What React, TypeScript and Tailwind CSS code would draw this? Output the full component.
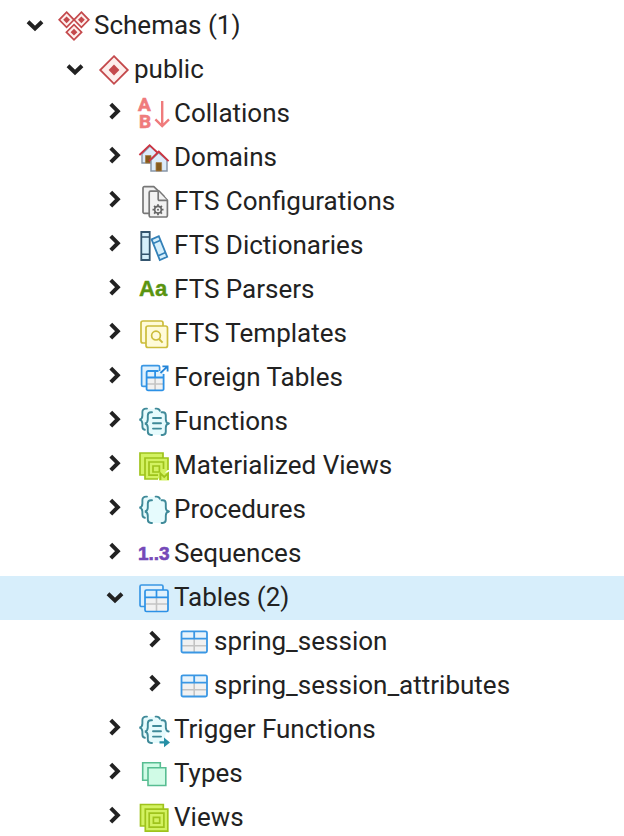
import { useState } from "react";
import type { ReactNode } from "react";
import clsx from "clsx";

type TreeNode = {
  label: string;
  icon: ReactNode;
  open?: boolean;
  children?: TreeNode[];
};

function Icon({ children }: { children: ReactNode }) {
  return (
    <svg viewBox="0 0 32 32" fill="none" aria-hidden="true" className="size-8 shrink-0 overflow-visible">
      {children}
    </svg>
  );
}

const schemas = (
  <Icon>
    <g stroke="#c4494c" strokeWidth="1.7" fill="#fdeeec">
      <path d="M8.6 2.2l7.4 7.6-7.4 7.6-7.4-7.6z" />
      <path d="M23.4 2.2l7.4 7.6-7.4 7.6-7.4-7.6z" />
      <path d="M16 14.6l7.6 7.6-7.6 7.6-7.6-7.6z" />
    </g>
    <path d="M8.6 6.4L12 9.8l-3.4 3.4-3.4-3.4zM23.4 6.4l3.4 3.4-3.4 3.4L20 9.800zM16 18.800l3.400 3.400-3.400 3.400-3.400-3.400z" fill="#c4494c" />
  </Icon>
);

const schema = (
  <Icon>
    <path d="M16 2.200L29.800 16 16 29.800 2.200 16z" fill="#fdeeec" stroke="#c4494c" strokeWidth="1.800" />
    <path d="M16 10.600l5.400 5.400-5.400 5.400-5.400-5.400z" fill="#c4494c" />
  </Icon>
);

const collations = (
  <Icon>
    <g fill="#ef7b7c" stroke="#ef7b7c" strokeWidth=".6" fontFamily="Roboto, sans-serif" fontWeight="700" fontSize="19">
      <text x="0" y="13">A</text>
      <text x="1" y="30">B</text>
    </g>
    <path d="M24.200 3v24.500M17.400 21.400l6.800 6.600 6.800-6.600" stroke="#ef7b7c" strokeWidth="2.400" />
  </Icon>
);

const domains = (
  <Icon>
    <path d="M4 12l8-8 9 8v9H4z" fill="#dcebfa" stroke="#8695a6" strokeWidth="1.400" />
    <path d="M7.500 13.500h5.500V21H7.500z" fill="#855a1c" stroke="#a97f45" strokeWidth=".8" />
    <path d="M1.400 13L11.600 3.200 22 13" stroke="#cc3341" strokeWidth="1.800" />
    <path d="M13 18l7.600-7.400L29 18v11H13z" fill="#dcebfa" stroke="#8695a6" strokeWidth="1.500" />
    <path d="M18 20.600h5.600V29H18z" fill="#855a1c" stroke="#a97f45" strokeWidth=".8" />
    <path d="M11 19.200L20.800 9.600l9.800 9.600" stroke="#cc3341" strokeWidth="1.800" />
  </Icon>
);

const configurations = (
  <Icon>
    <g fill="#f2f2f2" stroke="#777" strokeWidth="1.700" strokeLinejoin="round">
      <path d="M6.400.6h9.400l10 9.600v17.200H6.400A1.400 1.400 0 0 1 5 26V2A1.400 1.400 0 0 1 6.400.6z" />
      <path d="M12.600 5.200h8.600l8.200 9.200V29.600a1.400 1.400 0 0 1-1.400 1.400H12.600a1.400 1.400 0 0 1-1.400-1.400V6.600a1.400 1.400 0 0 1 1.400-1.400z" />
      <path d="M20.200 5.200v8a1.200 1.200 0 0 0 1.200 1.200h8" />
    </g>
    <path d="M20 18.200v11M14.500 23.700h11M16.100 19.800l7.800 7.800M23.900 19.800l-7.800 7.800" stroke="#666" strokeWidth="1.800" />
    <circle cx="20" cy="23.700" r="3.300" fill="#f2f2f2" stroke="#666" strokeWidth="1.600" />
    <circle cx="20" cy="23.700" r="1" fill="#666" />
  </Icon>
);

const dictionaries = (
  <Icon>
    <path d="M3.300 2h8.400v28H3.300z" fill="#d5effc" stroke="#34556f" strokeWidth="1.800" />
    <path d="M3.300 7h8.400M3.300 24.200h8.400" stroke="#34556f" strokeWidth="1.600" />
    <path d="M13.600 9.400l7.200-3.200 8.400 20.600-7.400 3.200z" fill="#d5effc" stroke="#3481b8" strokeWidth="1.800" />
    <path d="M15.200 13.400l7.300-3.200M20.200 25.800l7.300-3.200" stroke="#3481b8" strokeWidth="1.600" />
  </Icon>
);

const parsers = (
  <Icon>
    <text x="1" y="22" fill="#5a9410" stroke="#5a9410" strokeWidth=".4" fontFamily="Liberation Sans, sans-serif" fontWeight="700" fontSize="22">
      Aa
    </text>
  </Icon>
);

const templates = (
  <Icon>
    <g fill="#fffbd9" stroke="#ccbd3c" strokeWidth="1.700">
      <rect x="3" y="3" width="22" height="22" rx="2" />
      <rect x="8" y="8" width="21.500" height="21.500" rx="2" />
      <circle cx="18" cy="17.600" r="4.400" />
      <path d="M21 21l3.600 3.600" strokeWidth="2" />
    </g>
  </Icon>
);

const foreignTables = (
  <Icon>
    <rect x="3.600" y="3.600" width="18" height="20.800" rx="1.500" fill="#dff1fd" stroke="#3a97e4" strokeWidth="1.700" />
    <rect x="8.600" y="9" width="17" height="19.400" rx="1.500" fill="#f1f1f1" />
    <path d="M8.600 9h17v6.500h-17z" fill="#dff1fd" />
    <path d="M17.100 15.500v12.700M8.600 22h17" stroke="#c3c3c3" strokeWidth="1.600" />
    <path d="M20.500 9H10.100a1.500 1.500 0 0 0-1.500 1.500v16.400a1.500 1.500 0 0 0 1.500 1.500h14a1.500 1.500 0 0 0 1.500-1.500V12" stroke="#2c91e6" strokeWidth="1.800" />
    <path d="M8.600 15.500h17M17.100 9v6.500" stroke="#2c91e6" strokeWidth="1.800" />
    <path d="M22.500 11l7-6.600M24.400 4.400h5.200v5.200" stroke="#2485d8" strokeWidth="1.800" />
  </Icon>
);

function Braces({ lines, arrow }: { lines?: boolean; arrow?: boolean }) {
  return (
    <Icon>
      <path d="M9 2.600c-5 0-3 7-4 9.400l-3 1.900 3 1.900c1 2.400-1 8 3 8l15-10V4z" fill="#e6fbfd" />
      <path d="M14 6.200h10c4 0 3 6 3.600 9.200l3.600 2.200-3.600 2.200c-.6 3.200.4 9.200-3.600 9.200H14c-4 0-3-6-3.600-9.200l-3.400-2.200 3.400-2.200c.6-3.200-.4-9.200 3.600-9.200z" fill="#e6fbfd" />
      <g stroke="#3f8a99" strokeWidth="1.900" strokeLinecap="round">
        <path d="M9 2.600H8C5.600 2.600 4.400 4 4.400 6v3.400c0 2.600-1 3.800-3 4.200 2 .4 3 1.600 3 4.200v2.800c0 2 .8 3 2.400 3.200" />
        <path d="M17.600 2.600h1c1.800 0 2.800.8 3.200 2.200" />
        <path d="M14 6.200h-1c-2.200 0-3.200 1.200-3.200 3.400v3.600c0 2.600-.9 3.900-2.900 4.300 2 .4 2.900 1.700 2.900 4.300v3.800c0 2.200 1 3.400 3.200 3.400h1" />
        <path d="M23.600 6.200h1.200c2.200 0 3 1.200 3 3.400v3.600c0 2.600.9 3.900 2.900 4.300" />
        {!arrow && <path d="M30.700 17.500c-2 .4-2.900 1.700-2.900 4.300v3.800c0 2.200-.8 3.400-3 3.400h-1.200" />}
        {lines && <path d="M15 12h8M15 17.300h8M15 22.600h8" />}
      </g>
      {arrow && <path d="M21.500 27.200h4.500v-3.600l6 4.800-6 4.800v-3.600h-4.500z" fill="#268fa5" />}
    </Icon>
  );
}

const materializedViews = (
  <Icon>
    <g fill="#d3f261" stroke="#9fc31c" strokeWidth="1.700">
      <path d="M2 3h23v22H2z" />
      <path d="M30 20V8H7v21h13" />
      <path d="M25.500 19v-7H11v13.200h9" />
      <path d="M15 16h6.400v6H15z" />
    </g>
    <path d="M21 22.500h10v8H21z" fill="#d3f261" />
    <path d="M22.400 30v-6.600l3.800 3.600 3.800-3.600V30" stroke="#9fc31c" strokeWidth="1.900" />
  </Icon>
);

const sequences = (
  <Icon>
    <text x="0" y="22" fill="#7549b8" stroke="#7549b8" strokeWidth=".6" fontFamily="Liberation Sans, sans-serif" fontWeight="700" fontSize="19">
      1..3
    </text>
  </Icon>
);

const tables = (
  <Icon>
    <rect x="2" y="3" width="23" height="21.500" rx="1.500" fill="#dff1fd" stroke="#3a97e4" strokeWidth="1.700" />
    <rect x="7" y="8" width="23" height="21.500" rx="1.500" fill="#f1f1f1" />
    <path d="M7.500 8.500h22V15h-22z" fill="#dff1fd" />
    <path d="M18.500 15.500v13.400M7.500 22h22" stroke="#c3c3c3" strokeWidth="1.600" />
    <rect x="7" y="8" width="23" height="21.500" rx="1.500" stroke="#2c91e6" strokeWidth="1.700" />
    <path d="M7 15.300h23M18.500 8v7.300" stroke="#2c91e6" strokeWidth="1.700" />
  </Icon>
);

const table = (
  <Icon>
    <rect x="3.500" y="5.300" width="25.500" height="21.200" rx="1.500" fill="#f1f1f1" />
    <path d="M4 6h24.500v6.700H4z" fill="#e8f3fb" />
    <path d="M16.200 13v13M4 19.700h24.500" stroke="#c3c3c3" strokeWidth="1.600" />
    <rect x="3.500" y="5.300" width="25.500" height="21.200" rx="1.500" stroke="#3a97e4" strokeWidth="1.800" />
    <path d="M3.500 12.700H29M16.200 5.300v7.400" stroke="#3a97e4" strokeWidth="1.800" />
  </Icon>
);

const types = (
  <Icon>
    <g fill="#d0fbe6" stroke="#58bd92" strokeWidth="1.600">
      <path d="M4.700 4.700h17.600v17.600H4.700z" />
      <path d="M10 9.700h17.800v17.800H10z" />
    </g>
  </Icon>
);

const views = (
  <Icon>
    <g fill="#d3f261" stroke="#9fc31c" strokeWidth="1.700">
      <path d="M2.500 2.500h22.800V24H2.500z" />
      <path d="M7.300 7.200h22.500v22H7.300z" />
      <path d="M11.200 11.200h14.700v14H11.200z" />
      <path d="M15.400 15.300h6.300v5.800h-6.300z" />
    </g>
  </Icon>
);

const tree: TreeNode[] = [
  {
    label: "Schemas (1)",
    icon: schemas,
    open: true,
    children: [
      {
        label: "public",
        icon: schema,
        open: true,
        children: [
          { label: "Collations", icon: collations },
          { label: "Domains", icon: domains },
          { label: "FTS Configurations", icon: configurations },
          { label: "FTS Dictionaries", icon: dictionaries },
          { label: "FTS Parsers", icon: parsers },
          { label: "FTS Templates", icon: templates },
          { label: "Foreign Tables", icon: foreignTables },
          { label: "Functions", icon: <Braces lines /> },
          { label: "Materialized Views", icon: materializedViews },
          { label: "Procedures", icon: <Braces /> },
          { label: "Sequences", icon: sequences },
          {
            label: "Tables (2)",
            icon: tables,
            open: true,
            children: [
              { label: "spring_session", icon: table },
              { label: "spring_session_attributes", icon: table },
            ],
          },
          { label: "Trigger Functions", icon: <Braces lines arrow /> },
          { label: "Types", icon: types },
          { label: "Views", icon: views },
        ],
      },
    ],
  },
];

const indents = ["pl-[18px]", "pl-[58px]", "pl-[98px]", "pl-[138px]"];

type ItemProps = {
  node: TreeNode;
  level: number;
  selected: string;
  onSelect: (label: string) => void;
};

function TreeItem({ node, level, selected, onSelect }: ItemProps) {
  const [open, setOpen] = useState(!!node.open);
  const active = selected === node.label;

  return (
    <li>
      <div className={clsx("flex h-11 items-center", indents[level], active && "bg-[#d7eefb]")}>
        <button
          type="button"
          aria-label={`Toggle ${node.label}`}
          aria-expanded={open}
          onClick={() => setOpen(!open)}
          className="mr-2 size-8 shrink-0"
        >
          <svg viewBox="0 0 32 32" fill="none" stroke="#222" strokeWidth="4" className="size-8">
            <path d={open ? "M10 11.800l7 6.600 7-6.600" : "M12.800 6.200l7 7-7 7"} />
          </svg>
        </button>
        <button
          type="button"
          onClick={() => onSelect(node.label)}
          className="flex items-center gap-1 whitespace-nowrap"
        >
          {node.icon}
          <span className="pb-0.5">{node.label}</span>
        </button>
      </div>
      {open && node.children && (
        <ul>
          {node.children.map((child) => (
            <TreeItem key={child.label} node={child} level={level + 1} selected={selected} onSelect={onSelect} />
          ))}
        </ul>
      )}
    </li>
  );
}

export default function App() {
  const [selected, setSelected] = useState("Tables (2)");

  return (
    <main className="h-screen w-full overflow-hidden bg-white pt-1 font-['Roboto',sans-serif] text-[26px] leading-8 text-[#222]">
      <ul>
        {tree.map((node) => (
          <TreeItem key={node.label} node={node} level={0} selected={selected} onSelect={setSelected} />
        ))}
      </ul>
    </main>
  );
}
